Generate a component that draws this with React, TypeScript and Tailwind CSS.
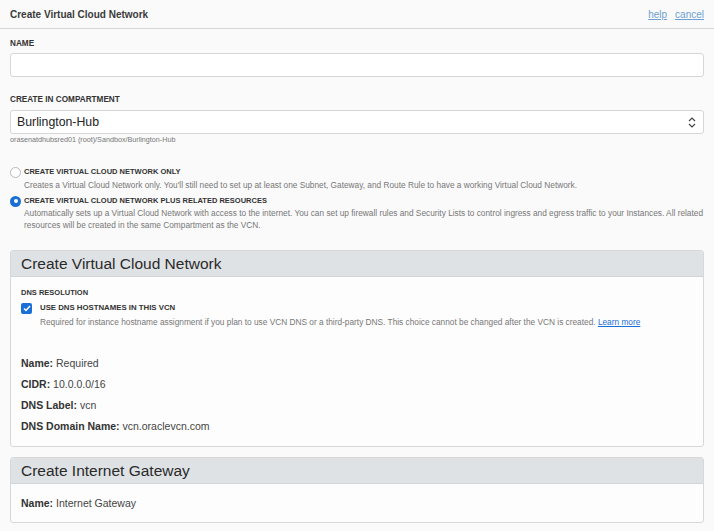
import React from "react";

const font = { fontFamily: '"Liberation Sans", Arial, sans-serif' };

function Radio({ checked }: { checked?: boolean }) {
  return checked ? (
    <span className="w-[11px] h-[11px] rounded-full bg-[#1a6fd6] flex items-center justify-center shrink-0">
      <span className="w-[4px] h-[4px] rounded-full bg-white" />
    </span>
  ) : (
    <span className="w-[11px] h-[11px] rounded-full border border-[#b9b9b9] bg-white shrink-0" />
  );
}

export default function App() {
  return (
    <div className="w-full min-h-[531px] bg-[#fafafa] text-[#333]" style={font}>
      <div className="h-[29px] border-b border-[#d6d6d6] flex items-center justify-between pl-[10px] pr-[10px]">
        <span className="text-[10px] font-bold text-[#3a3a3a]">Create Virtual Cloud Network</span>
        <div className="flex gap-[8px] text-[10px] text-[#6d9fd3]">
          <span className="underline">help</span>
          <span className="underline">cancel</span>
        </div>
      </div>
      <div className="px-[10px]">
        <div className="mt-[10px] h-[10px] leading-[10px] text-[8.2px] font-bold text-[#333]">NAME</div>
        <div className="mt-[4px] h-[24px] rounded-[3px] border border-[#d6d6d6] bg-white" />
        <div className="mt-[18px] h-[10px] leading-[10px] text-[8.2px] font-bold text-[#333]">CREATE IN COMPARTMENT</div>
        <div className="mt-[5px] h-[24px] rounded-[3px] border border-[#d6d6d6] bg-white flex items-center justify-between pl-[6px] pr-[7px]">
          <span className="text-[12.3px] text-[#222]">Burlington-Hub</span>
          <svg width="8" height="11" viewBox="0 0 8 11" fill="none" stroke="#444" strokeWidth="1.2">
            <path d="M1 4 L4 1 L7 4" />
            <path d="M1 7 L4 10 L7 7" />
          </svg>
        </div>
        <div className="mt-[1px] h-[10px] leading-[10px] text-[7.2px] text-[#777]">orasenatdhubsred01 (root)/Sandbox/Burlington-Hub</div>

        <div className="mt-[21px] h-[12px] flex items-center gap-[3px]">
          <Radio />
          <span className="text-[7.5px] font-bold text-[#333]">CREATE VIRTUAL CLOUD NETWORK ONLY</span>
        </div>
        <div className="mt-[2px] pl-[14px] leading-[10px] text-[8.3px] text-[#777]">
          Creates a Virtual Cloud Network only. You'll still need to set up at least one Subnet, Gateway, and Route Rule to have a working Virtual Cloud Network.
        </div>
        <div className="mt-[5px] h-[12px] flex items-center gap-[3px]">
          <Radio checked />
          <span className="text-[7.5px] font-bold text-[#333]">CREATE VIRTUAL CLOUD NETWORK PLUS RELATED RESOURCES</span>
        </div>
        <div className="pl-[14px] leading-[12px] text-[8.3px] text-[#777]">
          Automatically sets up a Virtual Cloud Network with access to the internet. You can set up firewall rules and Security Lists to control ingress and egress traffic to your Instances. All related resources will be created in the same Compartment as the VCN.
        </div>

        <div className="mt-[19px] rounded-[3px] border border-[#d8d8d8] bg-[#fdfdfd] overflow-hidden">
          <div className="h-[26px] bg-[#dfe2e5] border-b border-[#d2d5d8] flex items-center px-[10px]">
            <span className="text-[15.5px] text-[#2a2a2a]">Create Virtual Cloud Network</span>
          </div>
          <div className="px-[10px] pt-[11px] pb-[14px]">
            <div className="h-[10px] leading-[10px] text-[7.5px] font-bold text-[#333]">DNS RESOLUTION</div>
            <div className="mt-[4px] h-[12px] flex items-center gap-[8px]">
              <span className="w-[11px] h-[11px] rounded-[2px] bg-[#1a6fd6] flex items-center justify-center">
                <svg width="8" height="7" viewBox="0 0 8 7" fill="none" stroke="white" strokeWidth="1.5">
                  <path d="M1 3.5 L3 5.5 L7 1" />
                </svg>
              </span>
              <span className="text-[7.8px] font-bold text-[#333]">USE DNS HOSTNAMES IN THIS VCN</span>
            </div>
            <div className="mt-[3px] pl-[19px] h-[10px] leading-[10px] text-[8.3px] text-[#777]">
              Required for instance hostname assignment if you plan to use VCN DNS or a third-party DNS. This choice cannot be changed after the VCN is created.{" "}
              <span className="text-[#1a6fd6] underline">Learn more</span>
            </div>
            <div className="mt-[30px] flex flex-col gap-[9px] text-[10.5px] text-[#444]">
              <div className="h-[12px] leading-[12px]"><span className="font-bold text-[#333]">Name:</span> Required</div>
              <div className="h-[12px] leading-[12px]"><span className="font-bold text-[#333]">CIDR:</span> 10.0.0.0/16</div>
              <div className="h-[12px] leading-[12px]"><span className="font-bold text-[#333]">DNS Label:</span> vcn</div>
              <div className="h-[12px] leading-[12px]"><span className="font-bold text-[#333]">DNS Domain Name:</span> vcn.oraclevcn.com</div>
            </div>
          </div>
        </div>

        <div className="mt-[10px] rounded-[3px] border border-[#d8d8d8] bg-[#fdfdfd] overflow-hidden">
          <div className="h-[26px] bg-[#dfe2e5] border-b border-[#d2d5d8] flex items-center px-[10px]">
            <span className="text-[15.5px] text-[#2a2a2a]">Create Internet Gateway</span>
          </div>
          <div className="px-[10px] pt-[13px] pb-[13px] text-[10.5px] text-[#444]">
            <div className="h-[12px] leading-[12px]"><span className="font-bold text-[#333]">Name:</span> Internet Gateway</div>
          </div>
        </div>
      </div>
    </div>
  );
}
